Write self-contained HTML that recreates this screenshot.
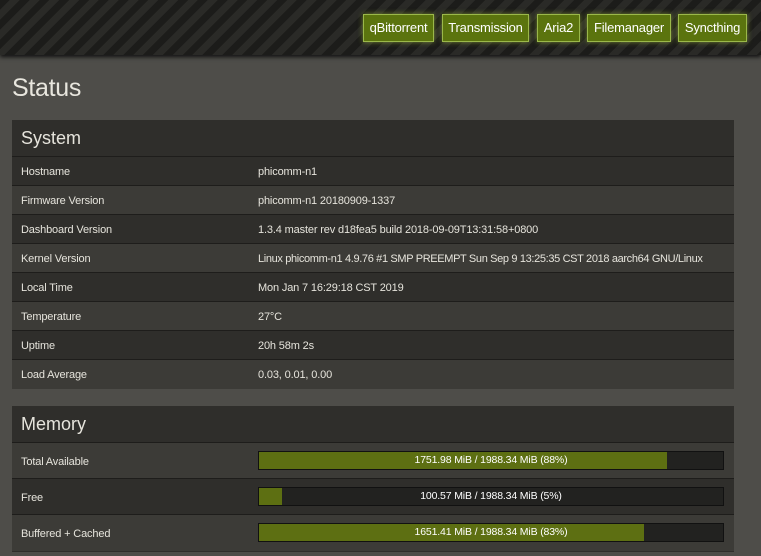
<!DOCTYPE html>
<html><head><style>
*{margin:0;padding:0;box-sizing:border-box}
body{width:761px;height:556px;overflow:hidden;background:#4e4d49;font-family:"Liberation Sans",sans-serif;color:#e6e4dc;position:relative}
.hdr{position:absolute;left:0;top:0;width:761px;height:55px;background:repeating-linear-gradient(135deg,#1c1c1a 0 7px,#2a2a27 7px 14px);box-shadow:0 2px 4px #111}
.btn{position:absolute;top:14px;height:28px;background:#5b740e;border:1px solid #9bb84a;box-shadow:0 0 5px rgba(170,200,60,.6);color:#fff;font:13px "Liberation Sans",sans-serif;line-height:26px;text-align:center;letter-spacing:-.2px}
h1{position:absolute;left:12px;top:74px;font-size:25px;font-weight:normal;color:#e8e6de;letter-spacing:-.3px}
.panel{position:absolute;left:12px;width:722px;background:#2f2e2b}
.ph{height:37px;font-size:18px;padding-left:9px;line-height:37px;border-bottom:1px solid #1e1d1b}
.row{position:relative;border-bottom:1px solid #1e1d1b;font-size:11px;padding-left:9px;white-space:nowrap;letter-spacing:-.15px}
.v{position:absolute;left:246px;top:1px}
.bar{position:absolute;left:246px;width:466px;height:19px;background:#222220;border:1px solid #111;text-align:center;font-size:10.5px;line-height:17px;color:#fff}
.bar i{position:absolute;left:0;top:0;bottom:0;background:#5d6f12}
.bar span{position:relative}
.l{position:relative;top:1px}
</style></head><body>
<div class="hdr">
<div class="btn" style="left:363px;width:71px">qBittorrent</div>
<div class="btn" style="left:442px;width:87px">Transmission</div>
<div class="btn" style="left:537px;width:43px">Aria2</div>
<div class="btn" style="left:587px;width:84px">Filemanager</div>
<div class="btn" style="left:678px;width:69px">Syncthing</div>
</div>
<h1>Status</h1>
<div class="panel" style="top:120px">
<div class="ph">System</div>
<div>
<div class="row" style="height:29px;line-height:29px;background:#2f2e2b"><span class="l">Hostname</span><span class="v">phicomm-n1</span></div>
<div class="row" style="height:29px;line-height:29px;background:#3c3b37"><span class="l">Firmware Version</span><span class="v">phicomm-n1 20180909-1337</span></div>
<div class="row" style="height:29px;line-height:29px;background:#2f2e2b"><span class="l">Dashboard Version</span><span class="v">1.3.4 master rev d18fea5 build 2018-09-09T13:31:58+0800</span></div>
<div class="row" style="height:29px;line-height:29px;background:#3c3b37"><span class="l">Kernel Version</span><span class="v" style="letter-spacing:-.35px">Linux phicomm-n1 4.9.76 #1 SMP PREEMPT Sun Sep 9 13:25:35 CST 2018 aarch64 GNU/Linux</span></div>
<div class="row" style="height:29px;line-height:29px;background:#2f2e2b"><span class="l">Local Time</span><span class="v">Mon Jan 7 16:29:18 CST 2019</span></div>
<div class="row" style="height:29px;line-height:29px;background:#3c3b37"><span class="l">Temperature</span><span class="v">27°C</span></div>
<div class="row" style="height:29px;line-height:29px;background:#2f2e2b"><span class="l">Uptime</span><span class="v">20h 58m 2s</span></div>
<div class="row" style="height:29px;line-height:29px;background:#3c3b37;border-bottom:none"><span class="l">Load Average</span><span class="v">0.03, 0.01, 0.00</span></div>
</div></div>
<div class="panel" style="top:406px;height:146px">
<div class="ph">Memory</div>
<div class="row" style="height:36px;line-height:36px;background:#3c3b37"><span class="l">Total Available</span><div class="bar" style="top:8px"><i style="width:88%"></i><span>1751.98 MiB / 1988.34 MiB (88%)</span></div></div>
<div class="row" style="height:36px;line-height:36px;background:#2f2e2b"><span class="l">Free</span><div class="bar" style="top:8px"><i style="width:5%"></i><span>100.57 MiB / 1988.34 MiB (5%)</span></div></div>
<div class="row" style="height:36px;line-height:36px;background:#3c3b37;border-bottom:none"><span class="l">Buffered + Cached</span><div class="bar" style="top:8px"><i style="width:83%"></i><span>1651.41 MiB / 1988.34 MiB (83%)</span></div></div>
</div>
</body></html>
